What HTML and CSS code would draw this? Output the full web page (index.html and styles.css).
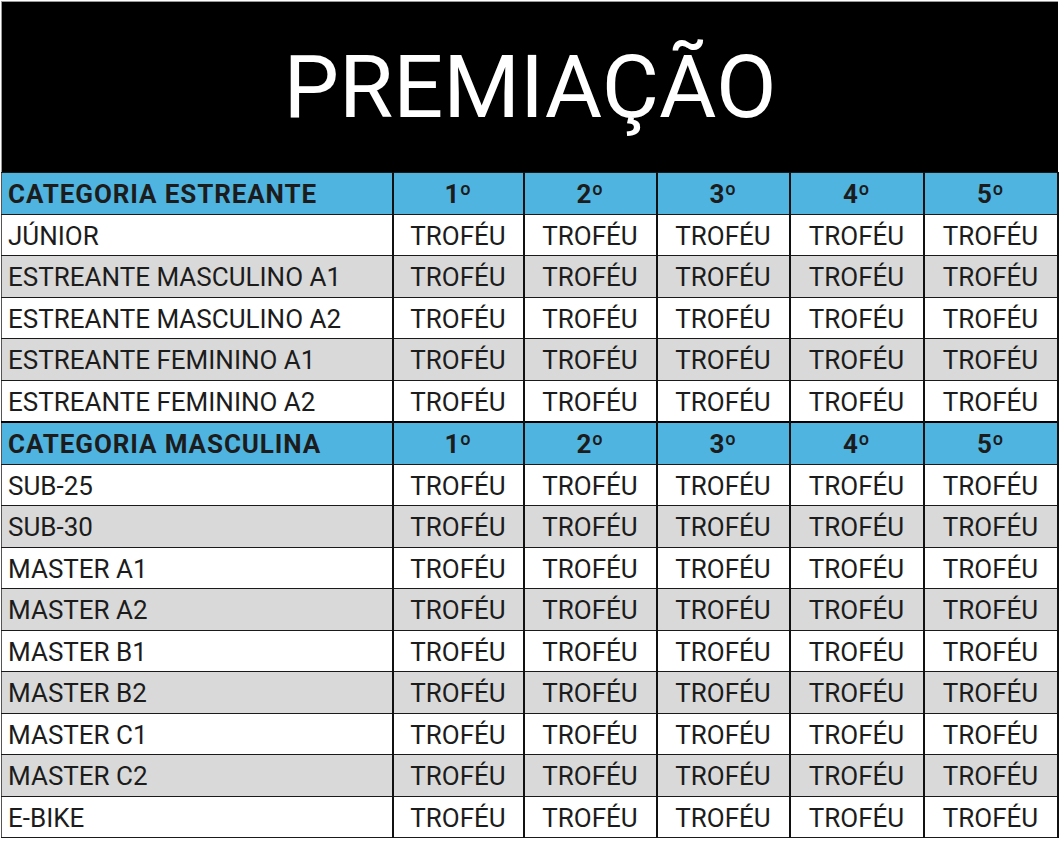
FILE: index.html
```html
<!DOCTYPE html>
<html lang="pt">
<head>
<meta charset="utf-8">
<title>Premiação</title>
<link rel="stylesheet" href="styles.css">
</head>
<body>
<div class="sheet">
  <div class="title">PREMIAÇÃO</div>
  <table class="grid">
    <colgroup>
      <col class="c-name"><col class="c-a"><col class="c-b"><col class="c-b"><col class="c-c"><col class="c-c">
    </colgroup>
    <tbody>
      <tr class="head"><td class="name">CATEGORIA ESTREANTE</td><td>1º</td><td>2º</td><td>3º</td><td>4º</td><td>5º</td></tr>
      <tr><td class="name">JÚNIOR</td><td>TROFÉU</td><td>TROFÉU</td><td>TROFÉU</td><td>TROFÉU</td><td>TROFÉU</td></tr>
      <tr class="alt"><td class="name">ESTREANTE MASCULINO A1</td><td>TROFÉU</td><td>TROFÉU</td><td>TROFÉU</td><td>TROFÉU</td><td>TROFÉU</td></tr>
      <tr><td class="name">ESTREANTE MASCULINO A2</td><td>TROFÉU</td><td>TROFÉU</td><td>TROFÉU</td><td>TROFÉU</td><td>TROFÉU</td></tr>
      <tr class="alt"><td class="name">ESTREANTE FEMININO A1</td><td>TROFÉU</td><td>TROFÉU</td><td>TROFÉU</td><td>TROFÉU</td><td>TROFÉU</td></tr>
      <tr><td class="name">ESTREANTE FEMININO A2</td><td>TROFÉU</td><td>TROFÉU</td><td>TROFÉU</td><td>TROFÉU</td><td>TROFÉU</td></tr>
      <tr class="head sep"><td class="name">CATEGORIA MASCULINA</td><td>1º</td><td>2º</td><td>3º</td><td>4º</td><td>5º</td></tr>
      <tr><td class="name">SUB-25</td><td>TROFÉU</td><td>TROFÉU</td><td>TROFÉU</td><td>TROFÉU</td><td>TROFÉU</td></tr>
      <tr class="alt"><td class="name">SUB-30</td><td>TROFÉU</td><td>TROFÉU</td><td>TROFÉU</td><td>TROFÉU</td><td>TROFÉU</td></tr>
      <tr><td class="name">MASTER A1</td><td>TROFÉU</td><td>TROFÉU</td><td>TROFÉU</td><td>TROFÉU</td><td>TROFÉU</td></tr>
      <tr class="alt"><td class="name">MASTER A2</td><td>TROFÉU</td><td>TROFÉU</td><td>TROFÉU</td><td>TROFÉU</td><td>TROFÉU</td></tr>
      <tr><td class="name">MASTER B1</td><td>TROFÉU</td><td>TROFÉU</td><td>TROFÉU</td><td>TROFÉU</td><td>TROFÉU</td></tr>
      <tr class="alt"><td class="name">MASTER B2</td><td>TROFÉU</td><td>TROFÉU</td><td>TROFÉU</td><td>TROFÉU</td><td>TROFÉU</td></tr>
      <tr><td class="name">MASTER C1</td><td>TROFÉU</td><td>TROFÉU</td><td>TROFÉU</td><td>TROFÉU</td><td>TROFÉU</td></tr>
      <tr class="alt"><td class="name">MASTER C2</td><td>TROFÉU</td><td>TROFÉU</td><td>TROFÉU</td><td>TROFÉU</td><td>TROFÉU</td></tr>
      <tr><td class="name">E-BIKE</td><td>TROFÉU</td><td>TROFÉU</td><td>TROFÉU</td><td>TROFÉU</td><td>TROFÉU</td></tr>
    </tbody>
  </table>
</div>
</body>
</html>
```
FILE: styles.css
```css
html, body {
  margin: 0;
  padding: 0;
  background: #ffffff;
}

body {
  font-family: Roboto, "Liberation Sans", sans-serif;
  color: #1c1c1c;
}

.sheet {
  width: 1058px;
  margin: 0;
  padding: 1px 0 0 1px;
  box-sizing: border-box;
}

.title {
  background: #000000;
  color: #ffffff;
  height: 171px;
  display: flex;
  align-items: center;
  justify-content: center;
  font-size: 88px;
  font-weight: 400;
  line-height: 1;
  border-top: 1px solid #9a9a9a;
  border-left: 1px solid #9a9a9a;
  box-sizing: border-box;
}

.grid {
  width: 1057px;
  border-collapse: collapse;
  table-layout: fixed;
}

.c-name { width: 391px; }
.c-a { width: 131px; }
.c-b { width: 133px; }
.c-c { width: 134px; }

.grid td {
  height: 38.5px;
  padding: 2px 0 0 0;
  border-top: 1px solid #1a1a1a;
  border-bottom: 1px solid #1a1a1a;
  border-left: 2px solid #111111;
  border-right: 2px solid #111111;
  text-align: center;
  vertical-align: middle;
  font-size: 26px;
  line-height: 1;
  white-space: nowrap;
  background: #ffffff;
}

.grid td.name {
  text-align: left;
  padding-left: 6px;
  border-left: 1px solid #555555;
}

.grid tr.alt td {
  background: #d9d9d9;
}

.grid tr.head td {
  background: #50b4e0;
  font-weight: 700;
}

.grid tr.head td.name {
  letter-spacing: 0.9px;
}

.grid tr.sep td {
  border-top: 2px solid #000000;
}
```
